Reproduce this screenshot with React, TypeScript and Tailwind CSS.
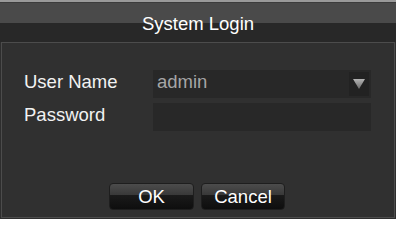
const LoginDialog = () => {
  return (
    <div className="w-[396px] h-[219px] bg-[#2e2e2e] flex flex-col font-['Liberation_Sans',Arial,sans-serif] text-[18.5px] select-none">
      {/* top edge */}
      <div className="h-[3px] bg-[linear-gradient(#9a9a9a_66%,#3c3c3c_66%)]" />

      {/* title bar */}
      <div className="h-[39px] pt-[3px] bg-[linear-gradient(#4a4a4a_51%,#282828_51%)] text-center text-white leading-[36px]">
        System Login
      </div>

      {/* body */}
      <div className="flex-1 mx-[1px] mb-[1px] border border-[#4c4c4c] bg-[#303030] flex flex-col">
        <div className="flex flex-col gap-[5px] pt-[27px] pl-[22px]">
          <div className="flex items-center">
            <span className="w-[129px] h-[28px] leading-[24px] text-[#f2f2f2]">User Name</span>
            <div className="w-[218px] h-[28px] bg-[#282828] flex items-center justify-between pl-[4px] pr-[2px]">
              <span className="leading-[24px] h-[28px] text-[#a6a6a6]">admin</span>
              <div className="w-[20px] h-[24px] bg-[#222222] flex items-center justify-center">
                <svg width="12" height="10" viewBox="0 0 12 10">
                  <defs>
                    <linearGradient id="tri" x1="0" y1="0" x2="0" y2="1">
                      <stop offset="0" stopColor="#b4b4b4" />
                      <stop offset="1" stopColor="#6a6a6a" />
                    </linearGradient>
                  </defs>
                  <polygon points="0,0 12,0 6,10" fill="url(#tri)" />
                </svg>
              </div>
            </div>
          </div>
          <div className="flex items-center">
            <span className="w-[129px] h-[28px] leading-[24px] text-[#f2f2f2]">Password</span>
            <div className="w-[218px] h-[28px] bg-[#282828]" />
          </div>
        </div>

        <div className="mt-auto mb-[7px] flex justify-center gap-[7px] pr-[2px]">
          <button className="w-[85px] h-[27px] rounded-[4px] border border-[#1e1e1e] bg-[linear-gradient(#4c4c4c,#383838_45%,#1a1a1a_45%,#0e0e0e)] text-white leading-[25px]">
            OK
          </button>
          <button className="w-[84px] h-[27px] rounded-[4px] border border-[#1e1e1e] bg-[linear-gradient(#4c4c4c,#383838_45%,#1a1a1a_45%,#0e0e0e)] text-white leading-[25px]">
            Cancel
          </button>
        </div>
      </div>
    </div>
  );
};

export default function App() {
  return <LoginDialog />;
}
